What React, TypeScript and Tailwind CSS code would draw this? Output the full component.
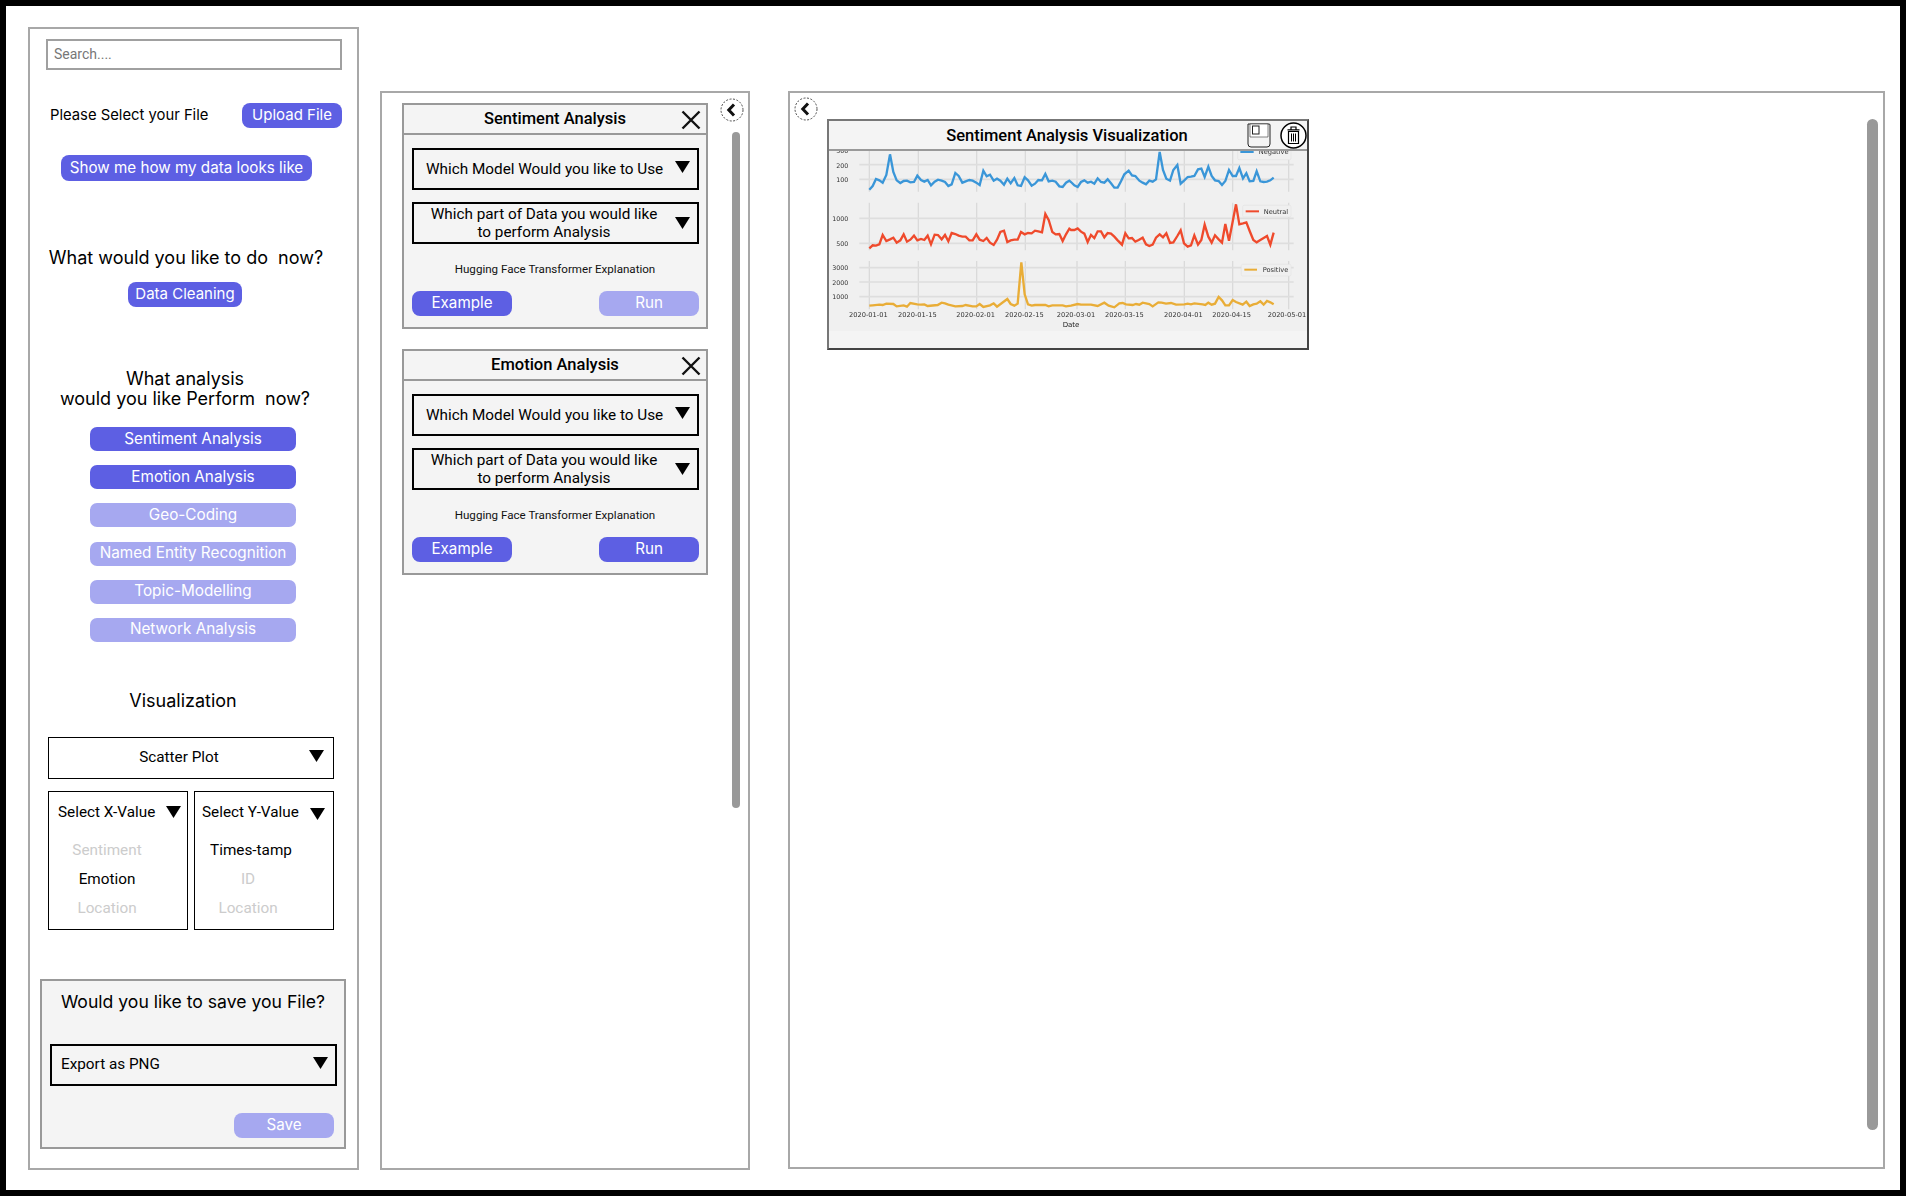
import React from "react";

const ROBOTO = "font-['Roboto',sans-serif]";
const INTER = "font-['Inter',sans-serif]";

function Tri({ className = "" }: { className?: string }) {
  return (
    <svg width="15" height="12" viewBox="0 0 15 12" className={"shrink-0 " + className}>
      <polygon points="0,0 15,0 7.5,12" fill="#000" />
    </svg>
  );
}

function Cross() {
  return (
    <svg width="20" height="20" viewBox="0 0 20 20">
      <path d="M1.5 1.5 L18.5 18.5 M18.5 1.5 L1.5 18.5" stroke="#111" strokeWidth="2.4" fill="none" />
    </svg>
  );
}

function Back() {
  return (
    <svg width="24" height="24" viewBox="0 0 24 24" className="shrink-0">
      <circle cx="12" cy="12" r="11" fill="#fff" stroke="#222" strokeWidth="0.8" strokeDasharray="2 1.5" />
      <path d="M14 6.5 L8.8 12 L14 17.5" stroke="#111" strokeWidth="3" fill="none" />
    </svg>
  );
}

function SaveIcon() {
  return (
    <svg width="24" height="25" viewBox="0 0 24 25" className="shrink-0">
      <path d="M1 1 H22 Q23 1 23 2 V21 Q23 24 20 24 H4 Q1 24 1 21 Z" fill="#f4f4f4" stroke="#222" strokeWidth="1" />
      <path d="M3 1 H21 V14 H3 Z" fill="#fff" stroke="#333" strokeWidth="0.6" />
      <rect x="5.5" y="3" width="6.5" height="8" fill="#fff" stroke="#222" strokeWidth="1" />
    </svg>
  );
}

function TrashIcon() {
  return (
    <svg width="27" height="27" viewBox="0 0 27 27" className="shrink-0">
      <circle cx="13.5" cy="13.5" r="12.5" fill="#fff" stroke="#000" strokeWidth="1.5" />
      <path d="M7.5 7.8 H19.5 M11 7.5 V5 H16 V7.5" stroke="#000" strokeWidth="1.2" fill="none" />
      <path d="M8.5 9.5 H18.5 V21.5 H8.5 Z" stroke="#000" strokeWidth="1.2" fill="none" />
      <path d="M11.5 11.5 V19.5 M13.5 11.5 V19.5 M15.5 11.5 V19.5" stroke="#000" strokeWidth="1" fill="none" />
    </svg>
  );
}

function Card({ title, runClass }: { title: string; runClass: string }) {
  return (
    <div className="w-[306px] h-[226px] border-2 border-[#999] bg-[#f4f4f4] flex flex-col">
      <div className="h-[30px] shrink-0 border-b-2 border-[#999] flex items-center relative">
        <div className={"w-full text-center text-[16.5px] font-medium text-black " + ROBOTO}>{title}</div>
        <div className="absolute right-[5px] top-[5px] flex"><Cross /></div>
      </div>
      <div className={"mt-[13px] ml-[8px] w-[287px] h-[42px] border-2 border-black flex items-center pl-[12px] pr-[7px] text-[15.3px] text-black " + ROBOTO}>
        <span className="flex-1">Which Model Would you like to Use</span>
        <Tri className="mb-[4px]" />
      </div>
      <div className={"mt-[12px] ml-[8px] w-[287px] h-[42px] border-2 border-black flex items-center pr-[7px] text-[15.3px] leading-[18px] text-black " + ROBOTO}>
        <span className="flex-1 text-center">Which part of Data you would like<br />to perform Analysis</span>
        <Tri className="ml-[1px]" />
      </div>
      <div className={"mt-[17px] h-[16px] text-center text-[11.6px] leading-[16px] text-[#111] " + ROBOTO}>Hugging Face Transformer Explanation</div>
      <div className="mt-[14px] ml-[8px] w-[287px] flex justify-between">
        <div className={"w-[100px] h-[25px] rounded-[8px] bg-[#5d5fe3] text-white flex items-center justify-center text-[15.2px] " + INTER}>Example</div>
        <div className={"w-[100px] h-[25px] rounded-[8px] text-white flex items-center justify-center text-[15.2px] " + INTER + " " + runClass}>Run</div>
      </div>
    </div>
  );
}

function pts(a: number[][], b: number[][]) {
  return a.map((p) => p.join(",")).concat(b.map((p) => p[0] + 720 + "," + p[1])).join(" ");
}

const blue = pts(
  [[115,131],[125,120],[135,99],[145,103],[155,110],[166,87],[177,25],[187,78],[197,103],[208,111],[218,105],[228,104],[238,109],[249,108],[259,89],[270,102],[280,107],[290,102],[300,118],[311,107],[321,101],[332,104],[342,108],[352,120],[362,115],[373,81],[383,90],[394,110],[404,106],[415,102],[425,104],[436,110],[446,117],[457,74],[467,91],[477,86],[488,104],[498,98],[508,104],[519,116],[529,98],[539,112],[550,96],[560,118],[570,120],[581,94],[591,103],[602,119],[612,113],[622,102],[633,103],[643,84],[653,106],[664,104],[674,107],[685,121],[695,123],[705,110],[715,104]],
  [[0,108],[10,118],[20,123],[30,108],[40,103],[50,110],[60,107],[70,113],[80,97],[90,108],[100,110],[110,100],[120,112],[130,125],[140,125],[150,106],[160,85],[173,74],[183,88],[193,90],[205,104],[215,110],[225,115],[235,104],[245,107],[255,100],[266,18],[276,72],[286,98],[297,104],[307,72],[319,57],[329,113],[340,103],[350,93],[360,92],[370,90],[381,70],[391,68],[401,93],[412,62],[422,90],[432,103],[443,105],[453,117],[463,105],[474,72],[485,90],[495,90],[505,66],[516,97],[526,82],[536,106],[547,105],[557,76],[568,106],[578,108],[588,107],[598,103],[608,95]]
);
const red = pts(
  [[115,307],[125,298],[135,299],[145,295],[155,267],[166,285],[177,280],[187,275],[197,290],[208,283],[218,265],[228,287],[238,281],[249,269],[259,283],[270,279],[280,282],[290,269],[300,295],[311,266],[321,267],[332,280],[342,267],[352,286],[362,261],[373,264],[383,269],[394,272],[404,272],[415,283],[425,283],[436,265],[446,281],[457,285],[467,276],[477,290],[488,297],[498,281],[508,258],[519,254],[529,288],[539,283],[550,281],[560,281],[570,258],[581,265],[591,261],[602,262],[612,254],[622,256],[633,259],[643,204],[653,222],[664,258],[674,265],[685,264],[695,285],[705,265],[715,248]],
  [[0,252],[10,252],[20,247],[30,257],[40,263],[50,288],[60,267],[70,276],[80,256],[90,256],[100,274],[110,261],[120,263],[130,272],[140,283],[153,296],[163,262],[173,277],[183,276],[193,287],[203,282],[215,275],[225,295],[235,300],[245,296],[255,275],[266,265],[276,274],[286,262],[297,291],[307,289],[319,270],[329,253],[339,292],[350,302],[360,298],[370,268],[381,296],[391,282],[401,236],[412,272],[422,290],[432,268],[443,280],[453,290],[463,234],[474,284],[495,175],[505,235],[516,232],[526,229],[536,255],[547,282],[557,289],[568,282],[578,276],[588,270],[598,296],[608,260]]
);
const yellow = pts(
  [[115,479],[125,478],[145,476],[155,477],[166,473],[187,474],[197,481],[218,478],[228,482],[238,471],[259,475],[270,476],[280,475],[290,480],[320,477],[332,470],[342,472],[352,476],[373,481],[394,480],[404,477],[425,481],[436,481],[446,474],[457,483],[477,478],[488,472],[498,482],[529,459],[539,474],[550,479],[560,473],[571,349],[581,445],[591,475],[602,479],[612,477],[643,477],[653,481],[664,478],[695,478],[705,481],[720,479]],
  [[20,474],[30,476],[60,476],[80,480],[100,470],[113,479],[130,484],[145,472],[155,471],[165,475],[185,477],[195,474],[205,476],[215,470],[235,474],[245,481],[262,469],[272,470],[285,473],[300,471],[315,476],[340,475],[350,473],[360,475],[370,472],[395,475],[403,477],[412,470],[422,476],[432,473],[443,453],[453,463],[463,478],[474,478],[485,462],[495,468],[515,476],[526,467],[536,480],[547,475],[557,473],[568,466],[578,476],[588,465],[598,469],[608,475]]
);

const vGrid = [115, 262, 437, 583, 738, 883, 1060, 1205, 1373];
const xTicks: [number, string][] = [[112,"2020-01-01"],[259,"2020-01-15"],[434,"2020-02-01"],[580,"2020-02-15"],[735,"2020-03-01"],[880,"2020-03-15"],[1057,"2020-04-01"],[1202,"2020-04-15"],[1368,"2020-05-01"]];
const yTicks: [number, string][] = [[21,"300"],[66,"200"],[108,"100"],[225,"1000"],[300,"500"],[373,"3000"],[416,"2000"],[460,"1000"]];

function Chart() {
  return (
    <svg width="478" height="180" viewBox="-6 15 1434 540" className="block blur-[0.5px] bg-[#f0f0f0]">
      {[[15,137],[170,313],[345,490]].map(([a, b]) =>
        vGrid.map((x) => <line key={a + "-" + x} x1={x} x2={x} y1={a} y2={b} stroke="#dadada" strokeWidth="4" />)
      )}
      {[56,100,217,292,365,408,452].map((y) => (
        <line key={y} x1="85" x2="1388" y1={y} y2={y} stroke="#dedede" strokeWidth="5" />
      ))}
      <polyline points={blue} fill="none" stroke="#3a96d8" strokeWidth="7" />
      <polyline points={red} fill="none" stroke="#ef4a2c" strokeWidth="7" />
      <polyline points={yellow} fill="none" stroke="#e9ad37" strokeWidth="7" />
      {yTicks.map(([y, t]) => (
        <text key={y + t} x="52" y={y} textAnchor="end" fontSize="19" fill="#333" fontFamily="DejaVu Sans">{t}</text>
      ))}
      {xTicks.map(([x, t]) => (
        <text key={t} x={x} y="512" textAnchor="middle" fontSize="20" fill="#333" fontFamily="DejaVu Sans">{t}</text>
      ))}
      <text x="720" y="542" textAnchor="middle" fontSize="21" fill="#222" fontFamily="DejaVu Sans">Date</text>
      <rect x="1220" y="5" width="160" height="36" rx="4" fill="#f0f0f0" stroke="#e4e4e4" strokeWidth="2" />
      <line x1="1228" x2="1268" y1="18" y2="18" stroke="#3a96d8" strokeWidth="6" />
      <text x="1283" y="24" fontSize="20" fill="#333" fontFamily="DejaVu Sans">Negative</text>
      <rect x="1235" y="178" width="145" height="35" rx="4" fill="#f0f0f0" stroke="#e4e4e4" strokeWidth="2" />
      <line x1="1244" x2="1284" y1="196" y2="196" stroke="#ef4a2c" strokeWidth="6" />
      <text x="1298" y="203" fontSize="20" fill="#333" fontFamily="DejaVu Sans">Neutral</text>
      <rect x="1231" y="355" width="149" height="35" rx="4" fill="#f0f0f0" stroke="#e4e4e4" strokeWidth="2" />
      <line x1="1240" x2="1278" y1="371" y2="371" stroke="#e9ad37" strokeWidth="6" />
      <text x="1295" y="379" fontSize="20" fill="#333" fontFamily="DejaVu Sans">Positive</text>
    </svg>
  );
}

const analysis: [string, boolean][] = [
  ["Sentiment Analysis", true],
  ["Emotion Analysis", true],
  ["Geo-Coding", false],
  ["Named Entity Recognition", false],
  ["Topic-Modelling", false],
  ["Network Analysis", false],
];

export default function App() {
  return (
    <div className="w-[1906px] h-[1196px] bg-black p-[6px]">
      <div className="w-full h-full bg-white flex items-start pt-[21px] pl-[22px]">
        {/* Left panel */}
        <div className="w-[331px] h-[1143px] border-2 border-[#a8a8a8] shrink-0 pt-[10px] flex flex-col items-start">
          <div className={"ml-[16px] w-[296px] h-[31px] border-2 border-[#a0a0a0] flex items-center pl-[6px] text-[14px] text-[#777] " + ROBOTO}>Search....</div>
          <div className="mt-[33px] ml-[20px] w-[292px] h-[25px] flex items-center justify-between">
            <span className={"text-[14.8px] text-black " + INTER}>Please Select your File</span>
            <div className={"w-[100px] h-[25px] rounded-[8px] bg-[#5d5fe3] text-white flex items-center justify-center text-[15px] " + INTER}>Upload File</div>
          </div>
          <div className={"mt-[27px] ml-[31px] w-[251px] h-[26px] rounded-[8px] bg-[#5d5fe3] text-white flex items-center justify-center text-[15.2px] " + INTER}>Show me how my data looks like</div>
          <div className={"mt-[65px] w-[312px] text-center h-[24px] leading-[24px] text-[18px] text-black " + INTER}>What would you like to do&nbsp; now?</div>
          <div className={"mt-[12px] ml-[98px] w-[114px] h-[25px] rounded-[8px] bg-[#5d5fe3] text-white flex items-center justify-center text-[15px] " + INTER}>Data Cleaning</div>
          <div className={"mt-[62px] w-[310px] text-center leading-[20px] text-[18px] text-black " + INTER}>What analysis<br />would you like Perform&nbsp; now?</div>
          <div className="mt-[18px] ml-[60px] flex flex-col gap-[14.2px]">
            {analysis.map(([t, on]) => (
              <div key={t} className={(on ? "bg-[#5d5fe3] " : "bg-[#a6a8f0] ") + "w-[206px] h-[24px] rounded-[7px] text-white flex items-center justify-center text-[15.3px] " + INTER}>{t}</div>
            ))}
          </div>
          <div className={"mt-[47px] w-[306px] text-center h-[24px] leading-[24px] text-[18px] text-black " + INTER}>Visualization</div>
          <div className={"mt-[24px] ml-[18px] w-[286px] h-[42px] border border-black flex items-center pr-[9px] text-[15.3px] text-black " + ROBOTO}>
            <span className="flex-1 text-center">Scatter Plot</span>
            <Tri className="mb-[3px]" />
          </div>
          <div className={"mt-[12px] ml-[18px] w-[286px] flex justify-between text-[15.3px] " + ROBOTO}>
            <div className="w-[140px] h-[139px] border border-black pt-[11px]">
              <div className="flex items-center pl-[9px] pr-[6px] h-[20px]">
                <span className="flex-1 text-black">Select X-Value</span>
                <Tri className="mb-[2px]" />
              </div>
              <div className="mt-[13px] w-[116px] text-center leading-[29px] text-black">
                <div className="text-[#ccc]">Sentiment</div>
                <div>Emotion</div>
                <div className="text-[#ccc]">Location</div>
              </div>
            </div>
            <div className="w-[140px] h-[139px] border border-black pt-[11px]">
              <div className="flex items-center pl-[7px] pr-[8px] h-[20px]">
                <span className="flex-1 text-black">Select Y-Value</span>
                <Tri className="mt-[3px]" />
              </div>
              <div className="mt-[13px] w-[106px] text-center leading-[29px] text-black">
                <div className="pl-[6px]">Times-tamp</div>
                <div className="text-[#ccc]">ID</div>
                <div className="text-[#ccc]">Location</div>
              </div>
            </div>
          </div>
          <div className="mt-[49px] ml-[10px] w-[306px] h-[170px] border-2 border-[#999] bg-[#f4f4f4] flex flex-col items-start">
            <div className={"mt-[9px] w-full text-center h-[24px] leading-[24px] text-[17.6px] text-black " + INTER}>Would you like to save you File?</div>
            <div className={"mt-[30px] ml-[8px] w-[287px] h-[42px] border-2 border-black flex items-center pl-[9px] pr-[7px] text-[15.3px] text-black " + ROBOTO}>
              <span className="flex-1">Export as PNG</span>
              <Tri className="mb-[4px]" />
            </div>
            <div className={"mt-[27px] ml-[192px] w-[100px] h-[25px] rounded-[8px] bg-[#a6a8f0] text-white flex items-center justify-center text-[15.2px] " + INTER}>Save</div>
          </div>
        </div>

        {/* Middle panel */}
        <div className="ml-[21px] w-[370px] h-[1079px] mt-[64px] border-2 border-[#a8a8a8] shrink-0 flex items-start">
          <div className="ml-[20px] mt-[10px] flex flex-col gap-[20px]">
            <Card title="Sentiment Analysis" runClass="bg-[#a6a8f0]" />
            <Card title="Emotion Analysis" runClass="bg-[#5d5fe3]" />
          </div>
          <div className="ml-[12px] mt-[5px] flex flex-col">
            <Back />
            <div className="ml-[12px] mt-[10px] w-[8px] h-[676px] rounded-full bg-[#999]" />
          </div>
        </div>

        {/* Right panel */}
        <div className="ml-[38px] w-[1097px] h-[1078px] mt-[64px] border-2 border-[#a8a8a8] shrink-0 flex items-start">
          <div className="ml-[4px] mt-[4px]"><Back /></div>
          <div className="ml-[9px] mt-[26px] w-[482px] h-[231px] border-2 border-[#777] border-r-[#444] border-b-[#444] bg-[#f4f4f4]">
            <div className="h-[30px] border-b-2 border-[#999] flex items-center">
              <div className="w-[58px]" />
              <div className={"flex-1 text-center pt-[2px] text-[16.5px] font-medium text-black " + ROBOTO}>Sentiment Analysis Visualization</div>
              <div className="w-[60px] flex items-center justify-between">
                <SaveIcon />
                <TrashIcon />
              </div>
            </div>
            <Chart />
          </div>
          <div className="ml-auto mr-[5px] mt-[26px] w-[11px] h-[1011px] rounded-full bg-[#999]" />
        </div>
      </div>
    </div>
  );
}
